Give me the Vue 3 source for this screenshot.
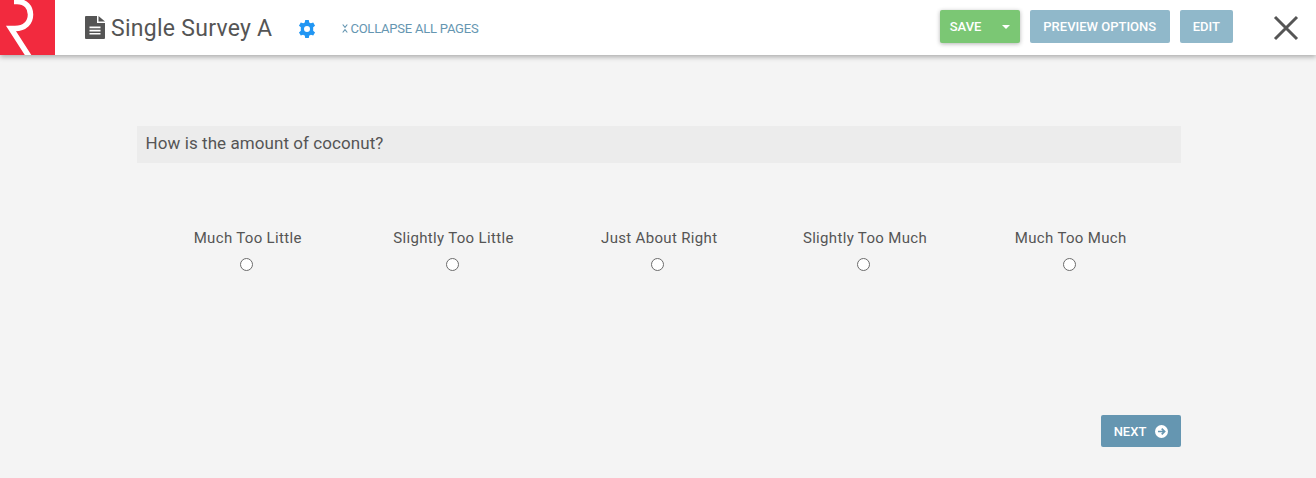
<script setup>
const options = ['Much Too Little', 'Slightly Too Little', 'Just About Right', 'Slightly Too Much', 'Much Too Much']
</script>

<template>
  <div class="page">
    <header class="topbar">
      <div class="logo">
        <svg width="55" height="55" viewBox="0 0 55 55">
          <path d="M14 1.500H17C26 1.500 30.500 7.500 30.500 14.500C30.500 22.500 25 28.500 15 28.500H11L30 58" fill="none" stroke="#fff" stroke-width="5.500" />
        </svg>
      </div>

      <div class="title">
        <svg class="file-icon" width="20" height="23" viewBox="0 0 20 23">
          <path fill="#555" fill-rule="evenodd" d="M1 0H12V7H20V22Q20 23 19 23H1Q0 23 0 22V1Q0 0 1 0ZM4.500 10.500V12.200H15.500V10.500ZM4.500 13.700V15.400H15.500V13.700ZM4.500 16.900V18.600H15.500V16.900Z" />
          <path fill="#555" d="M13.500 0L20 5.500H13.500Z" />
        </svg>
        <span>Single Survey A</span>
      </div>

      <svg class="gear" width="18" height="18" viewBox="0 0 24 24">
        <path fill="#2196f3" fill-rule="evenodd" d="M9.600 0H14.400L15 3.200C15.800 3.500 16.500 3.900 17.200 4.400L20.300 3.300L22.700 7.500L20.200 9.600C20.300 10.400 20.300 13.600 20.200 14.400L22.700 16.500L20.300 20.700L17.200 19.600C16.500 20.100 15.800 20.500 15 20.800L14.400 24H9.600L9 20.800C8.200 20.500 7.500 20.100 6.800 19.600L3.700 20.700L1.300 16.500L3.800 14.400C3.700 13.600 3.700 10.400 3.800 9.600L1.300 7.500L3.700 3.300L6.800 4.400C7.500 3.900 8.200 3.500 9 3.200ZM12 8A4 4 0 1 0 12 16A4 4 0 1 0 12 8Z" />
      </svg>

      <a class="collapse">
        <svg width="6" height="9" viewBox="0 0 6 9">
          <path d="M0.700 0.500L3 3.400L5.300 0.500M0.700 8.500L3 5.600L5.300 8.500" fill="none" stroke="#6596b1" stroke-width="1.100" />
        </svg>
        COLLAPSE ALL PAGES
      </a>

      <div class="actions">
        <div class="btn save">
          <span>SAVE</span>
          <i class="caret"></i>
        </div>
        <div class="btn muted preview">PREVIEW OPTIONS</div>
        <div class="btn muted">EDIT</div>
      </div>

      <svg class="close" width="26" height="26" viewBox="0 0 26 26">
        <path d="M2 2L24 24M24 2L2 24" stroke="#555" stroke-width="3" fill="none" />
      </svg>
    </header>

    <main class="content">
      <div class="question">How is the amount of coconut?</div>

      <div class="options">
        <label v-for="opt in options" :key="opt" class="option">
          <span class="option-label">{{ opt }}</span>
          <i class="radio"></i>
        </label>
      </div>

      <div class="footer">
        <div class="next">
          NEXT
          <svg width="13" height="13" viewBox="0 0 13 13">
            <circle cx="6.500" cy="6.500" r="6.500" fill="#fff" />
            <path d="M3 6.500H9.500M6.700 3.600L9.600 6.500L6.700 9.400" fill="none" stroke="#6596b1" stroke-width="1.700" />
          </svg>
        </div>
      </div>
    </main>
  </div>
</template>

<style scoped>
.page {
  height: 478px;
  background: #f4f4f4;
  font-family: Roboto, sans-serif;
  overflow: hidden;
}

/* TOP BAR */
.topbar {
  display: flex;
  align-items: center;
  height: 55px;
  background: #fff;
  box-shadow: 0 2px 5px rgba(0, 0, 0, 0.3);
}

.logo {
  width: 55px;
  height: 55px;
  background: #f22a3e;
  flex: none;
  overflow: hidden;
}

.logo svg {
  display: block;
}

.title {
  display: flex;
  align-items: center;
  margin-left: 30px;
  padding-top: 1px;
  font-size: 23px;
  letter-spacing: 0.27px;
  color: #555;
}

.file-icon {
  margin-right: 6px;
  margin-top: -1px;
}

.gear {
  margin: 2px 0 0 26px;
}

.collapse {
  display: flex;
  align-items: center;
  gap: 2px;
  margin: 2px 0 0 26px;
  font-size: 13px;
  letter-spacing: -0.22px;
  color: #6596b1;
}

.actions {
  display: flex;
  gap: 10px;
  margin-left: auto;
  margin-top: -2px;
}

.btn {
  display: flex;
  align-items: center;
  height: 33px;
  padding: 0 13px;
  border-radius: 2px;
  font-size: 13px;
  font-weight: 500;
  color: #fff;
}

.save {
  width: 80px;
  box-sizing: border-box;
  padding: 0 10px;
  justify-content: space-between;
  background: #7bc774;
  box-shadow: 0 1px 4px rgba(0, 0, 0, 0.3);
}

.caret {
  border: 4px solid transparent;
  border-top-color: #fff;
  border-bottom: 0;
}

.muted {
  background: #90b8ca;
}

.preview {
  width: 140px;
  box-sizing: border-box;
  justify-content: center;
  padding: 0;
}

.close {
  margin: 0 17px 0 40px;
}

/* QUESTION */
.content {
  width: 1044px;
  margin: 71px 0 0 137px;
}

.question {
  height: 37px;
  line-height: 35px;
  padding-left: 8.6px;
  background: #ececec;
  font-size: 17px;
  letter-spacing: 0.07px;
  color: #555;
}

.options {
  display: grid;
  grid-template-columns: repeat(5, 205.75px);
  margin: 65px 0 0 6.6px;
}

.option {
  display: flex;
  flex-direction: column;
  align-items: center;
  gap: 10px;
  font-size: 15px;
  letter-spacing: 0.33px;
  line-height: 20px;
  color: #555;
}

.option-label {
  padding-left: 2.5px;
}

.radio {
  width: 11px;
  height: 11px;
  border: 1px solid #6b6b6b;
  border-radius: 50%;
  background: #fff;
}

.footer {
  display: flex;
  justify-content: flex-end;
  margin-top: 144px;
}

.next {
  display: flex;
  align-items: center;
  justify-content: center;
  gap: 9px;
  width: 80px;
  height: 32px;
  border-radius: 2px;
  background: #6596b1;
  font-size: 13px;
  font-weight: 500;
  color: #fff;
}
</style>
